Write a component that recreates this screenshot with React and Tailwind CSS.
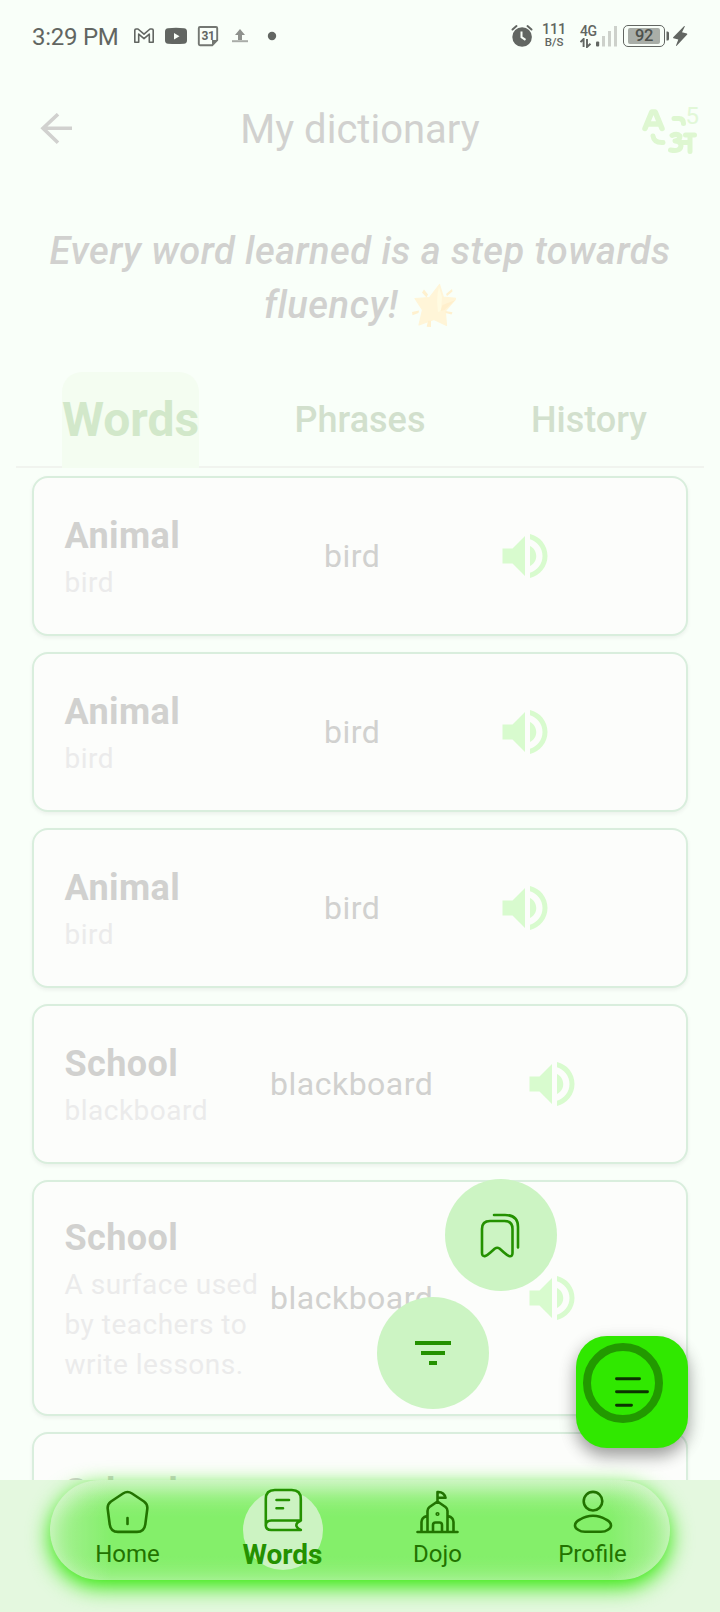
import React from "react";

const cards = [
  { title: "Animal", note: "bird", word: "bird" },
  { title: "Animal", note: "bird", word: "bird" },
  { title: "Animal", note: "bird", word: "bird" },
  { title: "School", note: "blackboard", word: "blackboard", wide: true },
  { title: "School", note: "A surface used by teachers to write lessons.", word: "blackboard", wide: true },
  { title: "School", wide: true },
];

function StatusBar() {
  return (
    <div className="flex h-[72px] shrink-0 items-center pl-8 text-[#626662]">
      <span className="w-[102px] pt-px text-[24px] leading-[28px] tracking-[-0.250px] whitespace-nowrap">3:29 PM</span>
      <svg className="h-6 w-[146px]" viewBox="134 24 146 24" fill="none">
        <path d="M136 29h2l6 5.200 6-5.200h2q1.200 0 1.200 1.200V42.300h-3.900v-8.200l-5.300 4.500-5.300-4.500v8.200h-3.900V30.200Q134.800 29 136 29z" stroke="#626662" strokeWidth="1.600" strokeLinejoin="round" />
        <path d="M168 28.300q8-1 16 0q3 .3 3 3.500v8.400q0 3.200-3 3.500q-8 .8-16 0q-3-.3-3-3.500v-8.400q0-3.200 3-3.500z" fill="#626662" />
        <path d="M174 33v6.500l5.500-3.200z" fill="#f9fff8" />
        <path d="M200 27h16q1.200 0 1.200 1.200V40l-5 5.200H200q-1.200 0-1.200-1.200V28.200Q198.800 27 200 27z" stroke="#737772" strokeWidth="1.900" />
        <path d="M212 45.500v-5.500h5.500z" fill="#737772" />
        <path d="M240 29l5 6h-3v5h-4v-5h-3z" fill="#8e918d" />
        <path d="M232 40.200h16v2h-16z" fill="#a9aca8" />
        <circle cx="272" cy="36" r="4.200" fill="#626662" />
      </svg>
      <span className="relative -left-[82px] -mr-[20px] w-5 text-center text-[12px] leading-6 font-bold tracking-[-0.5px]">31</span>
      <svg className="ml-[231px] h-6 w-6" viewBox="511.500 24 24 24" fill="none">
        <circle cx="522.600" cy="37" r="9.800" fill="#626662" />
        <path d="M513 29.500l4-3.400M532 29.500l-4-3.400" stroke="#626662" strokeWidth="2" strokeLinecap="round" />
        <path d="M522 31.500v5.700l4 2.600" stroke="#f9fff8" strokeWidth="2" />
      </svg>
      <div className="ml-[6px] flex w-[26px] flex-col items-center pb-[2px]">
        <span className="text-[14.500px] leading-[13px] font-medium tracking-[-0.200px]">111</span>
        <span className="text-[11.500px] leading-[12px] font-medium">B/S</span>
      </div>
      <div className="ml-[13px] flex w-[18px] flex-col">
        <span className="text-[14px] leading-[13px] font-medium tracking-[-0.500px]">4G</span>
        <svg className="h-[10px] w-[12px]" viewBox="0 0 12 10" fill="none" stroke="#626662" strokeWidth="1.900">
          <path d="M.5 4.200L3.600 1v8M10.500 5.800L7 9V1" />
        </svg>
      </div>
      <svg className="-ml-[3px] h-6 w-6" viewBox="596 24 24 24">
        <rect x="597" y="41.500" width="3.200" height="5" rx="1" fill="#626662" />
        <path d="M603 36h3v10.500h-3zM609 31h3v15.500h-3zM615 26h3v20.500h-3z" fill="#cdd1cb" />
      </svg>
      <div className="ml-[4px] flex h-[22px] w-[42px] items-center justify-center rounded-[5px] border-[1.500px] border-[#626662]">
        <div className="flex h-[16px] w-[32px] items-center justify-center rounded-[2px] bg-[#a9aea8] text-[16.500px] leading-4 font-medium tracking-[-0.300px] text-[#4d514c]">92</div>
      </div>
      <svg className="h-6 w-6" viewBox="666 24 24 24" fill="#626662">
        <path d="M667.500 31.500h1q1.500 0 1.500 1.500v6q0 1.500-1.500 1.500h-1z" />
        <path d="M685.200 26L674.200 37.300q-.5.800.3 1l4.800 1.200L677 45.500q0 .8.700.3L688.200 34.500q.4-.7-.3-1L683 32.200L685.800 26.500q.1-.8-.6-.5z" />
      </svg>
    </div>
  );
}

function Header() {
  return (
    <header className="flex h-[114px] shrink-0 items-center pr-4 pl-10">
      <svg className="h-8 w-[62px]" viewBox="0 0 62 32" fill="none" stroke="#d1d1cf" strokeWidth="3.600">
        <path d="M32 15.300H3M18 1.200L3 15.300l15 14.500" />
      </svg>
      <h1 className="w-[516px] pt-[2px] text-center text-[40px] leading-[48px] text-[#d1d1cf]">My dictionary</h1>
      <div className="relative ml-[22px] h-[50px] w-[64px]">
        <svg className="h-[50px] w-[64px]" viewBox="640 105 64 50" fill="none" stroke="#def7d1" strokeWidth="5" strokeLinecap="round" strokeLinejoin="round">
          <path d="M645 129.500l6.800-16.500h3.400L662 129.500M648 125h12" strokeWidth="5.500" />
          <path d="M674 119.500h5q4.500 0 4.500 5M653 137q1 7 10 6.500" strokeWidth="5" />
          <path d="M672 136.500q5-2.500 8 .5q0 4.500-5 5q6 .5 6 5q-1 6-10.500 4M681 143.500h8M690 137v15.500M685.500 136h9" strokeWidth="5" />
        </svg>
        <span className="absolute top-[-2px] right-[5px] text-[24px] leading-[28px] text-[#e2f8d8]">5</span>
      </div>
    </header>
  );
}

function Star() {
  return (
    <svg className="inline-block h-[46px] w-[48px] align-[-11px]" viewBox="409 283 48 46" fill="#fff5d8">
      <path d="M440.500 284.500l3.800 12.500 13 1.300-11 12.700 1.200 14.500-12.500-6-15 5.500 3.500-15-7.500-11.500 14.500-1z" strokeLinejoin="round" stroke="#fff5d8" strokeWidth="1.200" />
      <path d="M440 287l3 10-1 14-3 1q-2-14 1-25z" fill="#fffbe2" />
      <path d="M456.500 300l-13 5-2 6 4-1z" fill="#ffefcc" />
      <path d="M425 289.500l4 5-1.500 3-4.500-5zM453 289l-6 5 1 2 5.500-4.500zM413 312l7-1.500-.5 2.500-6 2.200zM446.500 311l7 1.300-1 2.200-6-1.500zM429 321l3-.5v6.500l-4.300-.3z" fill="#fff1cf" />
    </svg>
  );
}

function SpeakerIcon() {
  return (
    <svg className="-ml-px h-[60px] w-[60px]" viewBox="0 0 24 24" fill="#d8fbce">
      <path d="M3 9v6h4l5 5V4L7 9H3zM14 7.970v8.050c1.480-.73 2.500-2.250 2.500-4.020 0-1.770-1.020-3.290-2.500-4.030zM14 3.230v2.060c2.890.86 5 3.540 5 6.710s-2.110 5.850-5 6.710v2.060c4.010-.91 7-4.490 7-8.770s-2.990-7.860-7-8.770z" />
    </svg>
  );
}

function Card({ title, note, word, wide }) {
  return (
    <article className="flex min-h-[160px] shrink-0 items-center rounded-2xl border-2 border-[#d9eedd] bg-[#fcfdfb] py-[30px] pl-[30px] shadow-[0_2px_4px_rgba(0,0,0,0.06)]">
      <div className={wide ? "w-[206px] pl-[0.500px]" : "w-[260px] pl-[0.500px]"}>
        <h2 className="pt-px text-[36px] leading-[50px] font-bold tracking-[0.400px] text-[#d1d1cf]">{title}</h2>
        <p className="-mb-px min-h-[42px] pt-[2px] text-[28px] leading-[40px] tracking-[0.500px] text-[#ebebeb]">{note}</p>
      </div>
      {word && (
        <>
          <div className={wide ? "w-[253px] text-[32px] leading-[40px] tracking-[0.500px] text-[#d1d1cf]" : "w-[172px] text-[32px] leading-[40px] tracking-[0.500px] text-[#d1d1cf]"}>{word}</div>
          <SpeakerIcon />
        </>
      )}
    </article>
  );
}

const stroke = { fill: "none", strokeWidth: 2.6, strokeLinecap: "round", strokeLinejoin: "round" };

function HomeIcon() {
  return (
    <svg className="h-12 w-12" viewBox="103.500 1488 48 48" stroke="#227300" {...stroke}>
      <path d="M122.500 1493.500q4.500-3 9 0l12 8q3.800 2.800 3.300 7.300l-2 15.500q-1 7.600-8.300 7.600h-19q-7.300 0-8.300-7.600l-2-15.500q-.5-4.500 3.300-7.300z" />
      <path d="M127 1518v6" />
    </svg>
  );
}

function BookIcon() {
  return (
    <svg className="h-12 w-12" viewBox="259 1488 48 48" stroke="#249100" {...stroke}>
      <path d="M265.800 1526v-27q0-9 9-9h17q9 0 9 9v21.500h-29.500q-5.500 0-5.500 4.800q0 4.700 5.500 4.700h29.500M300.800 1520.500q-9 4.500 0 9.500M276.500 1500h12.500M276.500 1508.300h6.500" />
    </svg>
  );
}

function DojoIcon() {
  return (
    <svg className="h-12 w-12" viewBox="414 1488 48 48" stroke="#227300" {...stroke}>
      <path d="M417.500 1532h40M427.500 1532v-21q0-2.500 2-4l8-5.500 8 5.500q2 1.500 2 4v21M421.500 1532v-10q0-4.500 5.500-6M453.500 1532v-10q0-4.500-5.500-6M433 1532v-7q0-2.500 2.500-2.500h4q2.500 0 2.500 2.500v7M437.500 1501.500v-9.500q6.500-.5 8 5.800h-8" />
      <circle cx="437.500" cy="1514" r=".8" />
    </svg>
  );
}

function ProfileIcon() {
  return (
    <svg className="h-12 w-12" viewBox="568.500 1488 48 48" stroke="#227300" {...stroke}>
      <circle cx="592.500" cy="1501.200" r="9.300" />
      <path d="M574.500 1525.500q0-3.500 5-6q6-3.700 13-3.700t13 3.700q5 2.500 5 6q0 2.500-3 4.200q-3 2.100-7 2.100h-16q-4 0-7-2.100q-3-1.700-3-4.200z" />
    </svg>
  );
}

function NavItem({ icon, label, active }) {
  return (
    <div className="relative flex flex-1 flex-col items-center pt-2">
      {active && <div className="absolute top-[10px] left-1/2 h-20 w-20 -translate-x-1/2 rounded-full bg-[#ccf3c2]" />}
      <div className="relative">{icon}</div>
      <span
        className={
          active
            ? "relative mt-[3px] text-[28px] leading-[32px] font-bold text-[#249100]"
            : "relative mt-[4px] text-[24px] leading-[28px] text-[#227300]"
        }
      >
        {label}
      </span>
    </div>
  );
}

function BottomNav() {
  return (
    <nav className="absolute inset-x-0 bottom-0 h-[132px] bg-[#e4f8df] px-[50px]">
      <div className="relative h-[100px]">
        <div className="absolute inset-x-0 top-[7px] -bottom-[7px] rounded-full bg-[#2ce800] blur-[11px]" />
        <div className="absolute inset-0 rounded-full bg-[#dcf5d4]/50 bg-[linear-gradient(to_right,rgba(220,245,212,0.4),rgba(220,245,212,0.22)_30px,transparent_62px,transparent_558px,rgba(220,245,212,0.22)_590px,rgba(220,245,212,0.4)),linear-gradient(to_bottom,rgba(220,245,212,0.25),rgba(220,245,212,0.12)_16px,transparent_38px,transparent_75px,rgba(220,245,212,0.12))]" />
        <div className="relative flex h-full">
          <NavItem icon={<HomeIcon />} label="Home" />
          <NavItem icon={<BookIcon />} label="Words" active />
          <NavItem icon={<DojoIcon />} label="Dojo" />
          <NavItem icon={<ProfileIcon />} label="Profile" />
        </div>
      </div>
    </nav>
  );
}

function FloatingActions() {
  return (
    <>
      <button className="absolute top-[1179px] left-[445px] flex h-28 w-28 items-center justify-center rounded-full bg-[#ccf4c3]">
        <svg className="h-12 w-12" viewBox="477.500 1211 48 48" stroke="#249100" {...stroke}>
          <path d="M482.500 1229q0-8 8-8h14.500q8 0 8 8v24q0 4-3.500 3q-2-.8-5-3.500l-4.500-4q-2.300-1.400-4.600 0l-4.500 4q-3 2.700-5 3.500q-3.400.8-3.400-3zM494.500 1215h11q13 0 13 12v20.500" />
        </svg>
      </button>
      <button className="absolute top-[1297px] left-[377px] flex h-28 w-28 items-center justify-center rounded-full bg-[#ccf4c3]">
        <svg className="h-12 w-12" viewBox="409 1329 48 48" fill="#249100">
          <path d="M415 1341h36v4h-36zM421 1351h24v4h-24zM429 1361h8v4h-8z" />
        </svg>
      </button>
      <button className="absolute top-[1336px] left-[576px] h-28 w-28 rounded-[31px] bg-[#30e800] shadow-[0_8px_16px_rgba(0,0,0,0.3),0_6px_20px_rgba(0,0,0,0.12)]">
        <svg className="h-28 w-28" viewBox="576 1336 112 112" fill="none" strokeLinecap="round">
          <circle cx="623" cy="1383" r="36" stroke="#229900" strokeWidth="8" />
          <path d="M616.500 1378.700h23M616.500 1391.700h31M616.500 1405.300h15" stroke="#0b3300" strokeWidth="2.900" />
        </svg>
      </button>
    </>
  );
}

export default function App() {
  return (
    <div className="relative flex h-[1612px] w-[720px] flex-col overflow-hidden bg-[#f9fff9] font-['Roboto',sans-serif]">
      <StatusBar />
      <Header />
      <p className="mt-[38px] h-[108px] shrink-0 text-center text-[38px] leading-[54px] font-medium tracking-[0.500px] whitespace-nowrap text-[#d1d1cf] italic">
        Every word learned is a step towards
        <br />
        fluency! <Star />
      </p>
      <div className="mx-4 mt-[40px] flex h-24 shrink-0 items-center bg-[linear-gradient(#f1f4ef,#f1f4ef)] bg-[length:100%_2px] bg-bottom bg-no-repeat text-[36px] font-medium text-[#d2e0cd]">
        <div className="ml-[46px] flex h-24 w-[137px] items-center justify-center rounded-t-[20px] bg-[#f4fdf1] text-[48px] font-bold text-[#d2e8ca]">Words</div>
        <div className="ml-[94px] flex w-[134px] justify-center">Phrases</div>
        <div className="ml-[100px] flex w-[124px] justify-center">History</div>
      </div>
      <main className="mb-[132px] flex min-h-0 flex-1 flex-col gap-4 overflow-hidden px-8 pt-2">
        {cards.map((card, i) => (
          <Card key={i} {...card} />
        ))}
      </main>
      <BottomNav />
      <FloatingActions />
    </div>
  );
}
